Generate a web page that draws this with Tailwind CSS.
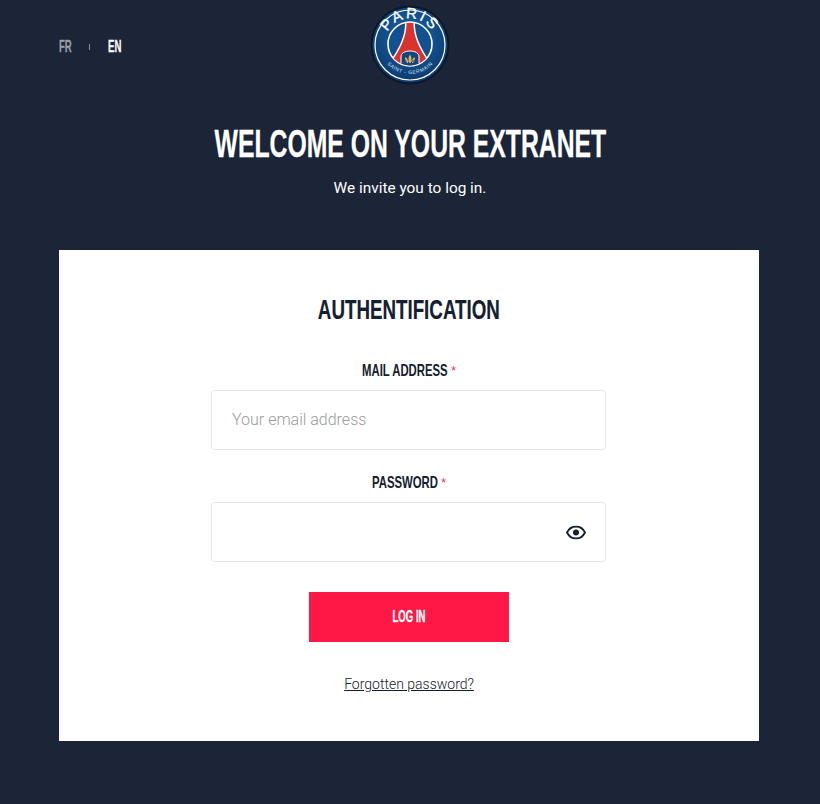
<!DOCTYPE html>
<html lang="en">
<head>
    <meta charset="UTF-8">
    <meta name="viewport" content="width=device-width, initial-scale=1.0">
    <title>Extranet</title>
    <script src="https://cdn.jsdelivr.net/npm/@tailwindcss/browser@4"></script>
</head>
<body class="bg-[#1b2537] h-[804px] overflow-hidden font-['Roboto',sans-serif] font-light">
    <!-- header -->
    <header class="relative h-[250px] flex flex-col items-center">
        <div class="absolute left-[59px] top-[38px] flex items-center h-[18px] font-['Liberation_Sans',sans-serif] font-bold text-[16px] [-webkit-text-stroke:.3px]">
            <a class="text-[#9a9ea6] w-[30px] origin-left scale-x-[.6]">FR</a>
            <span class="w-px h-[6px] bg-[#8a8f99]"></span>
            <a class="text-white ml-[18px] origin-left scale-x-[.6]">EN</a>
        </div>
        <svg class="mt-[5px] block" width="80" height="80" viewBox="0 0 80 80">
            <defs>
                <path id="arcTop" d="M14.5 39 A25.5 25.5 0 0 1 65.500 39"></path>
                <path id="arcBottom" d="M9 38 A31 31 0 0 0 71 38"></path>
                <clipPath id="innerCircle"><circle cx="40" cy="39" r="21.500"></circle></clipPath>
                <radialGradient id="badgeBlue" cx=".5" cy=".4" r=".6">
                    <stop offset="0" stop-color="#1c68ab"></stop>
                    <stop offset="1" stop-color="#0b3a70"></stop>
                </radialGradient>
            </defs>
            <circle cx="40" cy="40" r="39.500" fill="#0c1727"></circle>
            <circle cx="40" cy="40" r="37.500" fill="url(#badgeBlue)"></circle>
            <circle cx="40" cy="40" r="35" fill="none" stroke="#fff" stroke-width="1.200"></circle>
            <circle cx="40" cy="39" r="22" fill="#12508f" stroke="#fff" stroke-width="1.600"></circle>
            <g clip-path="url(#innerCircle)">
                <path d="M35 18 H45 C45 30 49 42 64 62 H16 C31 42 35 30 35 18 Z" fill="#fff"></path>
                <path d="M36.500 18 H43.500 C43.500 30 47.500 42 62 62 H18 C32.500 42 36.500 30 36.500 18 Z" fill="#d8332f"></path>
                <path d="M31 62 V52 C31 48 35 46 40 46 C45 46 49 48 49 52 V62 Z" fill="#12447f" stroke="#fff" stroke-width="1"></path>
            </g>
            <text font-family="Liberation Sans, sans-serif" font-size="15" stroke="#fff" stroke-width=".3" fill="#fff" letter-spacing="2.200" text-anchor="middle"><textPath href="#arcTop" startOffset="50%">PARIS</textPath></text>
            <text font-family="Liberation Sans, sans-serif" font-size="5" fill="#dbe4ef" letter-spacing=".6" text-anchor="middle"><textPath href="#arcBottom" startOffset="50%">SAINT - GERMAIN</textPath></text>
            <path d="M40 49.500 C41.800 52 41.800 54 40.700 58 H39.300 C38.200 54 38.200 52 40 49.500 Z M35 52.500 C37 52 38 54.500 38 58 H36.800 C36.800 56 36 54 35 54.500 Z M45 52.500 C43 52 42 54.500 42 58 H43.200 C43.200 56 44 54 45 54.500 Z M35.500 55.500 H44.500 V56.500 H35.500 Z" fill="#d9b65c"></path>
        </svg>
        <h1 class="mt-[39px] whitespace-nowrap text-white text-[39px] leading-[40px] font-bold font-['Liberation_Sans',sans-serif] scale-x-[.635] [-webkit-text-stroke:.3px]">WELCOME ON YOUR EXTRANET</h1>
        <p class="mt-[14px] text-white text-[15.400px] font-normal leading-[20px]">We invite you to log in.</p>
    </header>

    <!-- card -->
    <main class="mx-[59px] w-[700px] h-[491px] bg-white flex flex-col items-center pt-[44px]">
        <h2 class="whitespace-nowrap text-[#14202f] text-[28px] leading-[32px] font-bold font-['Liberation_Sans',sans-serif] scale-x-[.67] [-webkit-text-stroke:.2px]">AUTHENTIFICATION</h2>
        <label class="mt-[35px] flex gap-[3px] text-[#14202f] leading-[20px] font-bold font-['Liberation_Sans',sans-serif]">
            <span class="w-[86px] whitespace-nowrap origin-left text-[17px] scale-x-[.667]">MAIL ADDRESS</span>
            <span class="text-[#ff1845] text-[12px] font-normal">*</span>
        </label>
        <div class="mt-[9px] self-start ml-[152px] w-[395px] h-[60px] border border-[#e8e8e8] rounded-[4px] flex items-center pl-[20px] text-[#9b9b9b] text-[16px]">Your email address</div>
        <label class="mt-[23px] flex gap-[3px] text-[#14202f] leading-[20px] font-bold font-['Liberation_Sans',sans-serif]">
            <span class="w-[66px] whitespace-nowrap origin-left text-[17px] scale-x-[.667]">PASSWORD</span>
            <span class="text-[#ff1845] text-[12px] font-normal">*</span>
        </label>
        <div class="mt-[9px] self-start ml-[152px] w-[395px] h-[60px] border border-[#e8e8e8] rounded-[4px] flex items-center justify-end pr-[19px]">
            <svg width="20" height="14" viewBox="0 0 20 14" fill="none" class="translate-y-[.5px]">
                <path d="M1 7 C3 3 6.200 1 10 1 C13.800 1 17 3 19 7 C17 11 13.800 13 10 13 C6.200 13 3 11 1 7 Z" stroke="#14202f" stroke-width="1.800"></path>
                <circle cx="10" cy="7" r="3" fill="#14202f"></circle>
            </svg>
        </div>
        <button class="mt-[30px] w-[200px] h-[50px] bg-[#ff1845] text-white font-bold font-['Liberation_Sans',sans-serif] [-webkit-text-stroke:.3px]"><span class="block text-[16px] scale-x-[.6]">LOG IN</span></button>
        <a class="mt-[32px] text-[#14202f] text-[14px] leading-[20px] underline">Forgotten password?</a>
    </main>
</body>
</html>
